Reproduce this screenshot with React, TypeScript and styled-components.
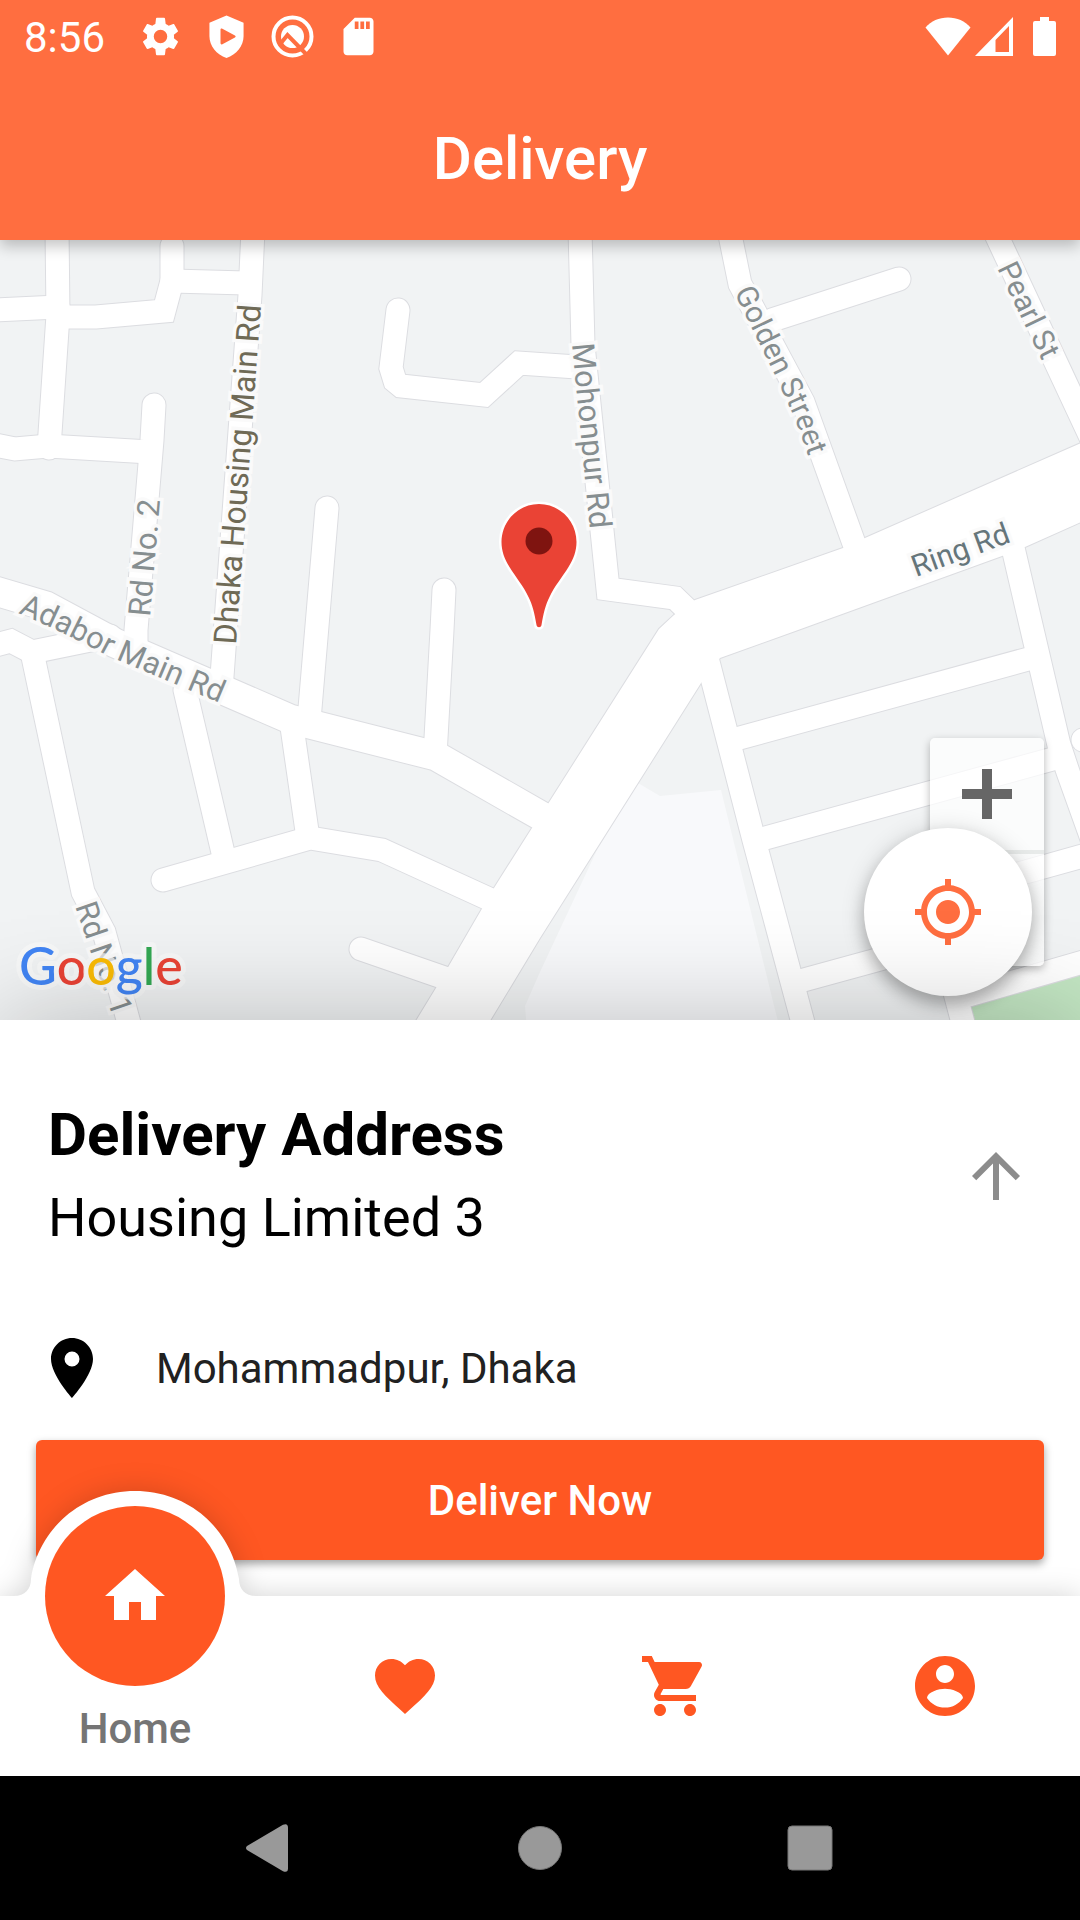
import React from "react";
import styled, { createGlobalStyle } from "styled-components";

const GlobalStyle = createGlobalStyle`
  *, *::before, *::after { box-sizing: border-box; }
  body { margin: 0; background: #fff; font-family: Roboto, "Noto Sans", sans-serif; }
  button { font: inherit; border: 0; padding: 0; background: none; cursor: pointer; }
  svg { display: block; }
  h1, h2, p { margin: 0; }
`;

const Screen = styled.div`
  display: flex;
  flex-direction: column;
  min-height: 100vh;
  overflow: hidden;
`;

const Header = styled.header`
  position: relative;
  z-index: 3;
  background: #ff6e40;
  color: #fff;
  box-shadow: 0 6px 14px rgba(0, 0, 0, 0.24);
`;

const StatusBar = styled.div`
  display: flex;
  align-items: center;
  justify-content: space-between;
  height: 72px;
  padding: 0 24px;
`;

const StatusGroup = styled.div<{ $gap: number }>`
  display: flex;
  align-items: center;
  gap: ${(p) => p.$gap}px;
`;

const Clock = styled.time`
  font-size: 42px;
  line-height: 48px;
  padding-top: 4px;
  margin-right: 12px;
`;

const AppTitle = styled.h1`
  padding: 52px 0 46px;
  font-size: 60px;
  line-height: 70px;
  font-weight: 500;
  text-align: center;
`;

const MapArea = styled.main`
  position: relative;
  flex: 1 1 780px;
  min-height: 480px;
  background: #f1f3f4;
`;

const MapDrawing = styled.svg`
  position: absolute;
  inset: 0;
  width: 100%;
  height: 100%;
`;

const ZoomControl = styled.div`
  position: absolute;
  right: 36px;
  bottom: 54px;
  display: grid;
  grid-template-rows: 112px 112px;
  gap: 4px;
  width: 114px;
  border-radius: 5px;
  background: rgba(255, 255, 255, 0.72);
  box-shadow: 0 3px 9px rgba(0, 0, 0, 0.28);
  overflow: hidden;
`;

const ZoomButton = styled.button`
  display: grid;
  place-items: center;
  color: #666;

  & + & {
    box-shadow: 0 -4px 0 #e8ebea;
  }
`;

const LocateButton = styled.button`
  position: absolute;
  right: 48px;
  bottom: 24px;
  display: grid;
  place-items: center;
  width: 168px;
  height: 168px;
  border-radius: 50%;
  background: #fff;
  color: #ff6e40;
  box-shadow: 0 9px 15px rgba(0, 0, 0, 0.22), 0 3px 24px rgba(0, 0, 0, 0.16);
`;

const Sheet = styled.section`
  position: relative;
  z-index: 1;
  display: flex;
  flex-direction: column;
  padding: 73px 36px 36px;
  background: #fff;
  box-shadow: 0 0 100px rgba(0, 0, 0, 0.24);
`;

const AddressHeader = styled.div`
  display: flex;
  align-items: center;
  justify-content: space-between;
  padding: 0 12px;
`;

const AddressTitle = styled.h2`
  font-size: 60px;
  line-height: 84px;
  font-weight: 700;
  color: #000;
`;

const AddressArea = styled.p`
  font-size: 54px;
  line-height: 82px;
  color: #000;
`;

const ExpandButton = styled.button`
  color: #8c8c8c;
`;

const LocationRow = styled.div`
  display: flex;
  align-items: center;
  gap: 48px;
  padding: 73px 0 36px;
  font-size: 42px;
  line-height: 48px;
  color: #000;
`;

const LocationName = styled.span`
  padding-top: 2px;
  color: #212121;
`;

const DeliverButton = styled.button`
  height: 120px;
  padding-top: 2px;
  border-radius: 6px;
  background: #ff5722;
  color: #fff;
  font-size: 42px;
  line-height: 48px;
  font-weight: 500;
  box-shadow: 0 4px 8px rgba(0, 0, 0, 0.36);
`;

const TabBar = styled.nav`
  position: relative;
  z-index: 2;
  display: grid;
  grid-template-columns: repeat(4, 1fr);
  height: 180px;
  background: #fff;
  filter: drop-shadow(0 0 14px rgba(0, 0, 0, 0.17));
`;

const Tab = styled.a`
  position: relative;
  display: flex;
  align-items: center;
  justify-content: center;
  color: #ff5722;
  text-decoration: none;
`;

const ActiveTab = styled(Tab)`
  align-items: flex-end;
  padding-bottom: 23px;
  color: #757575;
  font-size: 42px;
  line-height: 48px;
  font-weight: 500;
`;

const Bump = styled.svg`
  position: absolute;
  top: -105px;
  left: 50%;
  margin-left: -121px;
`;

const ActiveDisc = styled.span`
  position: absolute;
  top: -90px;
  left: 50%;
  display: grid;
  place-items: center;
  width: 180px;
  height: 180px;
  margin-left: -90px;
  border-radius: 50%;
  background: #ff5722;
  color: #fff;
`;

const SystemBar = styled.footer`
  position: relative;
  z-index: 3;
  display: flex;
  align-items: center;
  justify-content: space-around;
  height: 144px;
  padding: 0 135px;
  background: #000;
  color: #999;
`;

const MapLabel = styled.text<{ $size?: number; $color?: string }>`
  font-family: Roboto, sans-serif;
  font-size: ${(p) => p.$size ?? 30}px;
  fill: ${(p) => p.$color ?? "#868e90"};
  stroke: #fafafa;
  stroke-width: 7px;
  paint-order: stroke;
`;

const MapLogo = styled.text`
  font-family: Lato, sans-serif;
  font-size: 52px;
  font-weight: 500;
  stroke: rgba(250, 250, 250, 0.7);
  stroke-width: 10px;
  stroke-linejoin: round;
  paint-order: stroke;
`;

type IconProps = { d: string; size?: number };

const Icon = ({ d, size = 72 }: IconProps) => (
  <svg width={size} height={size} viewBox="0 0 24 24" fill="currentColor" fillRule="evenodd" aria-hidden="true">
    <path d={d} />
  </svg>
);

const icons = {
  settings:
    "M19.14 12.94c.04-.3.06-.61.06-.94 0-.32-.02-.64-.07-.94l2.03-1.58c.18-.14.23-.41.12-.61l-1.92-3.32c-.12-.22-.37-.29-.59-.22l-2.39.96c-.5-.38-1.03-.7-1.62-.94L14.4 2.4c-.04-.24-.24-.4-.48-.4h-3.84c-.24 0-.43.16-.47.4l-.36 2.95c-.59.24-1.13.57-1.62.94l-2.39-.96c-.22-.08-.47 0-.59.22L2.74 8.87c-.12.21-.08.47.12.61l2.03 1.58c-.05.3-.09.63-.09.94s.02.64.07.94l-2.03 1.58c-.18.14-.23.41-.12.61l1.92 3.32c.12.22.37.29.59.22l2.39-.96c.5.38 1.03.7 1.62.94l.36 2.95c.05.24.24.4.48.4h3.84c.24 0 .44-.16.47-.4l.36-2.95c.59-.24 1.13-.56 1.62-.94l2.39.96c.22.08.47 0 .59-.22l1.92-3.32c.12-.22.07-.47-.12-.61l-2.01-1.58zM12 15.6A3.6 3.6 0 1 1 12 8.4a3.6 3.6 0 0 1 0 7.2z",
  shield:
    "M12 .8L2.900 4.700v7.200c0 5 3.800 9.900 9.100 11.500 5.300-1.600 9.100-6.500 9.100-11.500V4.700L12 .8zM9.800 7.900c-.5-.3-1-.1-1 .6v7c0 .7.500.9 1 .6l6.700-3.600c.5-.3.5-.7 0-1L9.800 7.900z",
  sdCard:
    "M18 2h-8L4 8v12c0 1.100.9 2 2 2h12c1.100 0 2-.9 2-2V4c0-1.100-.9-2-2-2zM12 8h-2V4h2v4zm3 0h-2V4h2v4zm3 0h-2V4h2v4z",
  locate:
    "M12 8c-2.210 0-4 1.790-4 4s1.790 4 4 4 4-1.790 4-4-1.790-4-4-4zm8.940 3c-.46-4.170-3.770-7.480-7.940-7.940V1h-2v2.060C6.830 3.520 3.520 6.830 3.060 11H1v2h2.060c.46 4.170 3.770 7.480 7.940 7.940V23h2v-2.060c4.170-.46 7.480-3.770 7.940-7.940H23v-2h-2.060zM12 19c-3.870 0-7-3.130-7-7s3.130-7 7-7 7 3.130 7 7-3.130 7-7 7z",
  arrowUp: "M4 12l1.410 1.410L11 7.830V20h2V7.830l5.580 5.590L20 12l-8-8-8 8z",
  place:
    "M12 2C8.130 2 5 5.130 5 9c0 5.250 7 13 7 13s7-7.750 7-13c0-3.870-3.130-7-7-7zm0 9.500a2.500 2.500 0 0 1 0-5 2.500 2.500 0 0 1 0 5z",
  home: "M10 20v-6h4v6h5v-8h3L12 3 2 12h3v8z",
  heart:
    "M12 21.350l-1.450-1.320C5.400 15.360 2 12.280 2 8.500 2 5.420 4.420 3 7.500 3c1.740 0 3.410.81 4.500 2.090C13.090 3.810 14.760 3 16.500 3 19.580 3 22 5.420 22 8.500c0 3.780-3.400 6.860-8.550 11.540L12 21.350z",
  cart: "M7 18c-1.100 0-1.990.9-1.990 2S5.900 22 7 22s2-.9 2-2-.9-2-2-2zM1 2v2h2l3.600 7.590-1.350 2.450c-.16.28-.25.61-.25.96 0 1.100.9 2 2 2h12v-2H7.420c-.14 0-.25-.11-.25-.25l.03-.12.900-1.630h7.450c.75 0 1.410-.41 1.750-1.030l3.580-6.490A1.003 1.003 0 0 0 20 4H5.210l-.94-2H1zm16 16c-1.100 0-1.990.9-1.990 2s.89 2 1.990 2 2-.9 2-2-.9-2-2-2z",
  account:
    "M12 2C6.480 2 2 6.480 2 12s4.480 10 10 10 10-4.480 10-10S17.520 2 12 2zm0 3c1.660 0 3 1.340 3 3s-1.340 3-3 3-3-1.340-3-3 1.340-3 3-3zm0 14.200c-2.500 0-4.710-1.280-6-3.220.03-1.990 4-3.080 6-3.080 1.990 0 5.970 1.090 6 3.080-1.290 1.940-3.500 3.220-6 3.220z",
};

/* Centre lines of the side streets, in map units. */
const streets = [
  "M57 230L58 315L49 448",
  "M-5 310L58 307",
  "M172 246V281L164 311L96 317H58",
  "M172 281L246 283",
  "M253 230L250 295L221 690",
  "M154 405L152 440L136 630V650",
  "M-5 445L15 449L48 446L150 452",
  "M398 310L391 368L395 381L401 386L484 395L519 363L577 367",
  "M580 230L583 345L608 589L675 598L700 622",
  "M729 230L740 284L803 402L860 560",
  "M772 320L899 279",
  "M994 230L1094 444",
  "M-8 646L11 641L32 652L110 636",
  "M32 652L83 892L104 932L132 1034",
  "M185 690L224 857",
  "M291 720L308 838",
  "M163 880L310 838L382 850L500 904",
  "M361 949L465 985",
  "M327 508L309 720",
  "M444 590L442 630L435 756",
  "M708 662L754 840L806 1034",
  "M736 739L1032 658",
  "M1010 535L1059 745L1068 772L1096 850",
  "M762 839L1060 757",
  "M1090 854L925 900",
  "M800 981L935 944",
  "M925 880L966 1034",
  "M962 997L1090 960",
  "M1083 740H1100",
];

const avenue = "M-8 590L46 606L115 643L290 719L436 756L550 821";

const ringRoad =
  "M695 600L843 548L865 538L1090 439V518L1025 547L1002 556L798 630L720 658L701 683L540 938L482 1034H408L436 988L494 888L532 828L548 804L659 629L674 615Z";

const CityMap = () => (
  <MapDrawing viewBox="0 240 1080 780" preserveAspectRatio="xMidYMid slice" role="img" aria-label="Map of Mohammadpur">
    <defs>
      <path id="l-dhaka" d="M236 645L262 292" />
      <path id="l-rd2" d="M150 617L161 489" />
      <path id="l-adabor" d="M18 613Q61 631 104 654L241 712" />
      <path id="l-mohonpur" d="M572 344L592 551" />
      <path id="l-golden" d="M734 292L754 333L776 377L795 419L814 471" />
      <path id="l-pearl" d="M997 268L1051 379" />
      <path id="l-ring" d="M916 577L1030 535" />
      <path id="l-rd1" d="M75 906L117 1029" />
    </defs>
    <rect x="-20" y="220" width="1120" height="820" fill="#f1f3f4" />
    <path d="M638 783L660 796L721 790L780 1030H527L525 1006L540 972L597 850Z" fill="#f8f9fb" />
    <path d="M966 1000L1090 970V1030H970Z" fill="#c3e6c3" />
    <g fill="none" stroke="#dcdde1">
      <g strokeWidth="25" strokeLinecap="round">
        {streets.map((d) => (
          <path key={d} d={d} />
        ))}
      </g>
      <path d={avenue} strokeWidth="31" />
      <path d={ringRoad} strokeWidth="2" />
    </g>
    <g fill="none" stroke="#fff">
      <g strokeWidth="23" strokeLinecap="round">
        {streets.map((d) => (
          <path key={d} d={d} />
        ))}
      </g>
      <path d={avenue} strokeWidth="29" />
      <path d={ringRoad} fill="#fff" stroke="none" />
    </g>
    <MapLabel $size={32} $color="#6f6a56"><textPath href="#l-dhaka">Dhaka Housing Main Rd</textPath></MapLabel>
    <MapLabel $size={31}><textPath href="#l-rd2">Rd No. 2</textPath></MapLabel>
    <MapLabel $size={31}><textPath href="#l-adabor">Adabor Main Rd</textPath></MapLabel>
    <MapLabel $size={31}><textPath href="#l-mohonpur">Mohonpur Rd</textPath></MapLabel>
    <MapLabel><textPath href="#l-golden">Golden Street</textPath></MapLabel>
    <MapLabel><textPath href="#l-pearl">Pearl St</textPath></MapLabel>
    <MapLabel $color="#65757a"><textPath href="#l-ring">Ring Rd</textPath></MapLabel>
    <MapLabel $size={31}><textPath href="#l-rd1">Rd No. 1</textPath></MapLabel>
    <path
      d="M539 504c-20.700 0-37.500 17-37.500 38 0 9 3 17 8 25 6 10 14 19 19 30 4 8 6 16 8 28 .5 3 4.500 3 5 0 2-12 4-20 8-28 5-11 13-20 19-30 5-8 8-16 8-25 0-21-16.800-38-37.500-38z"
      fill="#ea4335"
      stroke="#fff"
      strokeWidth="5"
      paintOrder="stroke"
    />
    <circle cx="539" cy="541" r="13.500" fill="#7f1410" />
    <MapLogo x="19" y="985">
      <tspan fill="#4285f4">G</tspan>
      <tspan fill="#ea4335">o</tspan>
      <tspan fill="#fbbc05">o</tspan>
      <tspan fill="#4285f4">g</tspan>
      <tspan fill="#34a853">l</tspan>
      <tspan fill="#ea4335">e</tspan>
    </MapLogo>
  </MapDrawing>
);

const QuickIcon = () => (
  <svg width="45" height="45" viewBox="0 0 45 45" fill="none" stroke="currentColor" aria-hidden="true">
    <path d="M32 38.800A19 19 0 0 0 32 6.200A19 19 0 1 0 31.300 39.300" stroke="none" />
    <circle cx="22.500" cy="22.500" r="19" strokeWidth="4" />
    <circle cx="22.500" cy="22.500" r="11.500" fill="currentColor" stroke="none" />
    <path d="M11 29L17.500 21L37 41" stroke="#ff6e40" strokeWidth="4" />
  </svg>
);

const WifiIcon = () => (
  <svg width="46" height="39" viewBox="0 0 46 39" fill="currentColor" aria-hidden="true">
    <path d="M23 38.500L.5 10.500C6 4 14 .5 23 .5s17 3.500 22.500 10z" />
  </svg>
);

const SignalIcon = () => (
  <svg width="38" height="39" viewBox="0 0 38 39" fill="currentColor" fillRule="evenodd" aria-hidden="true">
    <path d="M0 39L38 0v39zM20.500 23v12H34V9z" />
  </svg>
);

const BatteryIcon = () => (
  <svg width="23" height="39" viewBox="0 0 23 39" fill="currentColor" aria-hidden="true">
    <path d="M7 0h9v4h5q2 0 2 2v31q0 2-2 2H2q-2 0-2-2V6q0-2 2-2h5z" />
  </svg>
);

export default function App() {
  return (
    <>
      <GlobalStyle />
      <Screen>
        <Header>
          <StatusBar>
            <StatusGroup $gap={21}>
              <Clock>8:56</Clock>
              <Icon d={icons.settings} size={45} />
              <Icon d={icons.shield} size={45} />
              <QuickIcon />
              <Icon d={icons.sdCard} size={45} />
            </StatusGroup>
            <StatusGroup $gap={20}>
              <StatusGroup $gap={4}>
                <WifiIcon />
                <SignalIcon />
              </StatusGroup>
              <BatteryIcon />
            </StatusGroup>
          </StatusBar>
          <AppTitle>Delivery</AppTitle>
        </Header>

        <MapArea>
          <CityMap />
          <ZoomControl>
            <ZoomButton aria-label="Zoom in">
              <svg width="50" height="50" viewBox="0 0 50 50" fill="currentColor">
                <path d="M20 0h10v20h20v10H30v20H20V30H0V20h20z" />
              </svg>
            </ZoomButton>
            <ZoomButton aria-label="Zoom out">
              <svg width="50" height="50" viewBox="0 0 50 50" fill="currentColor">
                <path d="M0 20h50v10H0z" />
              </svg>
            </ZoomButton>
          </ZoomControl>
          <LocateButton aria-label="My location">
            <Icon d={icons.locate} />
          </LocateButton>
        </MapArea>

        <Sheet>
          <AddressHeader>
            <div>
              <AddressTitle>Delivery Address</AddressTitle>
              <AddressArea>Housing Limited 3</AddressArea>
            </div>
            <ExpandButton aria-label="Expand">
              <Icon d={icons.arrowUp} />
            </ExpandButton>
          </AddressHeader>
          <LocationRow>
            <Icon d={icons.place} />
            <LocationName>Mohammadpur, Dhaka</LocationName>
          </LocationRow>
          <DeliverButton>Deliver Now</DeliverButton>
        </Sheet>

        <TabBar>
          <ActiveTab href="#home" aria-current="page">
            <Bump width="242" height="106" viewBox="0 0 242 106" fill="#fff" aria-hidden="true">
              <path d="M0 106V105C11 105 17 98 17 88C25 38 67 0 121 0S217 38 225 88C225 98 231 105 242 105V106z" />
            </Bump>
            <ActiveDisc>
              <Icon d={icons.home} />
            </ActiveDisc>
            Home
          </ActiveTab>
          <Tab href="#favorites" aria-label="Favorites"><Icon d={icons.heart} /></Tab>
          <Tab href="#cart" aria-label="Cart"><Icon d={icons.cart} /></Tab>
          <Tab href="#account" aria-label="Account"><Icon d={icons.account} /></Tab>
        </TabBar>

        <SystemBar>
          <button aria-label="Back">
            <svg width="48" height="48" viewBox="0 0 48 48" fill="#999">
              <path d="M1 22L37 .8q5-2 5 3v40.400q0 5-5 3L1 26q-2-2 0-4z" />
            </svg>
          </button>
          <button aria-label="Home screen">
            <svg width="48" height="48" viewBox="0 0 48 48" fill="#999" stroke="#777">
              <circle cx="24" cy="24" r="21.500" />
            </svg>
          </button>
          <button aria-label="Recent apps">
            <svg width="48" height="48" viewBox="0 0 48 48" fill="#999" stroke="#777">
              <rect x="2" y="2" width="44" height="44" rx="4" />
            </svg>
          </button>
        </SystemBar>
      </Screen>
    </>
  );
}
